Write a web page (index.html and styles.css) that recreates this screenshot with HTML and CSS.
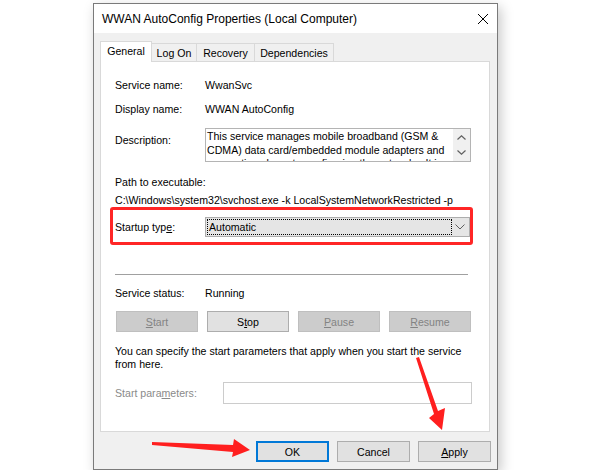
FILE: index.html
```html
<!DOCTYPE html>
<html lang="en">
<head>
    <meta charset="UTF-8">
    <meta name="viewport" content="width=device-width, initial-scale=1.0">
    <title>WWAN AutoConfig Properties (Local Computer)</title>
    <link rel="stylesheet" href="styles.css">
</head>
<body>
    <div class="window">
        <div class="titlebar">
            <span class="title">WWAN AutoConfig Properties (Local Computer)</span>
            <span class="close">
                <svg width="10" height="10" viewBox="0 0 10 10"><path d="M0 0L10 10M10 0L0 10" stroke="#000" stroke-width="1"/></svg>
            </span>
        </div>

        <div class="client">
            <div class="tabs">
                <div class="tab tab-general active">General</div>
                <div class="tab tab-logon">Log On</div>
                <div class="tab tab-recovery">Recovery</div>
                <div class="tab tab-deps">Dependencies</div>
            </div>

            <div class="panel">
                <div class="field">
                    <span class="label">Service name:</span>
                    <span>WwanSvc</span>
                </div>
                <div class="field field-display">
                    <span class="label">Display name:</span>
                    <span>WWAN AutoConfig</span>
                </div>
                <div class="field field-desc">
                    <span class="label">Description:</span>
                    <div class="desc-box">
                        <div class="desc-text">This service manages mobile broadband (GSM &amp;<br>CDMA) data card/embedded module adapters and<br>connections by auto-configuring the networks. It is</div>
                        <div class="desc-scroll">
                            <svg width="9" height="5" viewBox="0 0 9 5"><path d="M0.5 4.5L4.5 0.8L8.5 4.5" fill="none" stroke="#606060" stroke-width="1.2"/></svg>
                            <svg width="9" height="5" viewBox="0 0 9 5"><path d="M0.5 0.5L4.5 4.2L8.5 0.5" fill="none" stroke="#606060" stroke-width="1.2"/></svg>
                        </div>
                    </div>
                </div>

                <div class="path-label">Path to executable:</div>
                <div class="path">C:\Windows\system32\svchost.exe -k LocalSystemNetworkRestricted -p</div>

                <div class="startup">
                    <span class="label">Startup typ<u>e</u>:</span>
                    <div class="combo">
                        <span class="combo-value">Automatic</span>
                        <span class="combo-arrow">
                            <svg width="10" height="6" viewBox="0 0 10 6"><path d="M0.5 0.5L5 5L9.5 0.5" fill="none" stroke="#606060" stroke-width="1"/></svg>
                        </span>
                    </div>
                </div>

                <div class="separator"></div>

                <div class="status">
                    <span class="label">Service status:</span>
                    <span>Running</span>
                </div>

                <div class="svc-buttons">
                    <span class="btn disabled"><u>S</u>tart</span>
                    <span class="btn">S<u>t</u>op</span>
                    <span class="btn disabled"><u>P</u>ause</span>
                    <span class="btn disabled"><u>R</u>esume</span>
                </div>

                <div class="note">You can specify the start parameters that apply when you start the service<br>from here.</div>

                <div class="params">
                    <span class="params-label">Start para<u>m</u>eters:</span>
                    <div class="params-input"></div>
                </div>
            </div>

            <div class="dialog-buttons">
                <span class="btn wide default">OK</span>
                <span class="btn wide">Cancel</span>
                <span class="btn wide"><u>A</u>pply</span>
            </div>
        </div>
    </div>

    <svg class="arrows" width="600" height="475" viewBox="0 0 600 475">
        <polygon points="152,442 233,445 234,439 250,450 232,457 233,452 152,445" fill="#ff1f1f"/>
        <polygon points="416,358 419,357 438,411 445,408 442,430 429,418 434,414" fill="#ff1f1f"/>
    </svg>
</body>
</html>
```

FILE: styles.css
```css
body {
    margin: 0;
    background: #fff;
    font-family: "Liberation Sans", Arial, sans-serif;
    font-size: 10.6px;
    color: #000;
}
u { text-underline-offset: 1px; }

.window {
    margin: 3px 0 0 93px;
    width: 403px;
    height: 465px;
    border: 1px solid #7a7a7a;
    background: #f0f0f0;
    box-shadow: 3px 4px 12px rgba(0, 0, 0, 0.22);
    display: flex;
    flex-direction: column;
}
.titlebar {
    height: 29px;
    background: #fff;
    display: flex;
    align-items: center;
    padding-left: 8px;
}
.title { font-size: 12px; color: #000; }
.close { margin-left: auto; margin-right: 9px; display: flex; }

.client { padding: 0 6px; display: flex; flex-direction: column; }

.tabs {
    margin-top: 8px;
    height: 20px;
    display: flex;
    align-items: flex-end;
}
.tab {
    box-sizing: border-box;
    height: 18px;
    border: 1px solid #d9d9d9;
    border-bottom: none;
    border-left: none;
    background: #f0f0f0;
    display: flex;
    align-items: center;
    justify-content: center;
}
.tab.active {
    height: 21px;
    margin-bottom: -1px;
    border-left: 1px solid #d9d9d9;
    background: #fff;
    position: relative;
    padding-bottom: 2px;
}
.tab-general { width: 52px; }
.tab-logon { width: 45px; }
.tab-recovery { width: 58px; }
.tab-deps { width: 79px; }

.panel {
    box-sizing: border-box;
    width: 390px;
    height: 371px;
    border: 1px solid #d9d9d9;
    background: #fff;
    padding: 12px 0 0 14px;
}
.field { display: flex; align-items: center; height: 22px; }
.label { width: 90px; flex: none; }
.field-display { margin-top: 2px; }
.field-desc { margin-top: 8px; height: 34px; align-items: flex-start; }
.field-desc .label { padding-top: 5px; line-height: 14px; }

.desc-box {
    box-sizing: border-box;
    width: 266px;
    height: 34px;
    border: 1px solid #b4b4b4;
    display: flex;
}
.desc-text {
    flex: 1;
    padding: 1px 1px 0;
    line-height: 13.5px;
    white-space: nowrap;
    overflow: hidden;
}
.desc-scroll {
    width: 17px;
    background: #f0f0f0;
    display: flex;
    flex-direction: column;
    align-items: center;
    justify-content: space-between;
    padding: 6px 0 6px;
    box-sizing: border-box;
}

.path-label { margin-top: 13px; line-height: 14px; }
.path { margin-top: 4px; line-height: 14px; white-space: nowrap; }

.startup {
    box-sizing: border-box;
    margin-left: -5px;
    width: 363px;
    border: 3px solid #ff2626;
    border-radius: 3px;
    padding: 7px 0 5px 2px;
    display: flex;
    align-items: center;
}
.combo {
    box-sizing: border-box;
    width: 266px;
    height: 20px;
    border: 1px solid #adadad;
    background: #e5e5e5;
    display: flex;
    align-items: center;
    padding: 0 0 0 2px;
}
.combo-value {
    flex: 1;
    height: 14px;
    line-height: 14px;
    padding-left: 1px;
    outline: 1px dotted #000;
}
.combo-arrow { width: 18px; display: flex; justify-content: center; }

.separator { margin-top: 29px; width: 353px; height: 1px; background: #a0a0a0; }

.status { margin-top: 11px; line-height: 14px; display: flex; }

.svc-buttons {
    margin: 11px 0 0 1px;
    width: 355px;
    display: flex;
    justify-content: space-between;
}
.btn {
    box-sizing: border-box;
    width: 82px;
    height: 21px;
    border: 1px solid #adadad;
    background: #e1e1e1;
    display: flex;
    align-items: center;
    justify-content: center;
}
.btn.disabled { background: #cccccc; border-color: #bfbfbf; color: #838383; }

.note { margin-top: 13px; line-height: 13px; white-space: nowrap; }

.params { margin-top: 11px; display: flex; align-items: center; height: 22px; }
.params-label { width: 108px; flex: none; color: #8a8a8a; }
.params-input {
    box-sizing: border-box;
    width: 249px;
    height: 22px;
    border: 1px solid #cccccc;
    background: #fff;
}

.dialog-buttons {
    margin-top: 9px;
    display: flex;
    justify-content: flex-end;
    gap: 8px;
}
.btn.wide { width: 73px; }
.btn.default { border: 2px solid #0078d7; }

.arrows { position: absolute; left: 0; top: 0; pointer-events: none; }
```
